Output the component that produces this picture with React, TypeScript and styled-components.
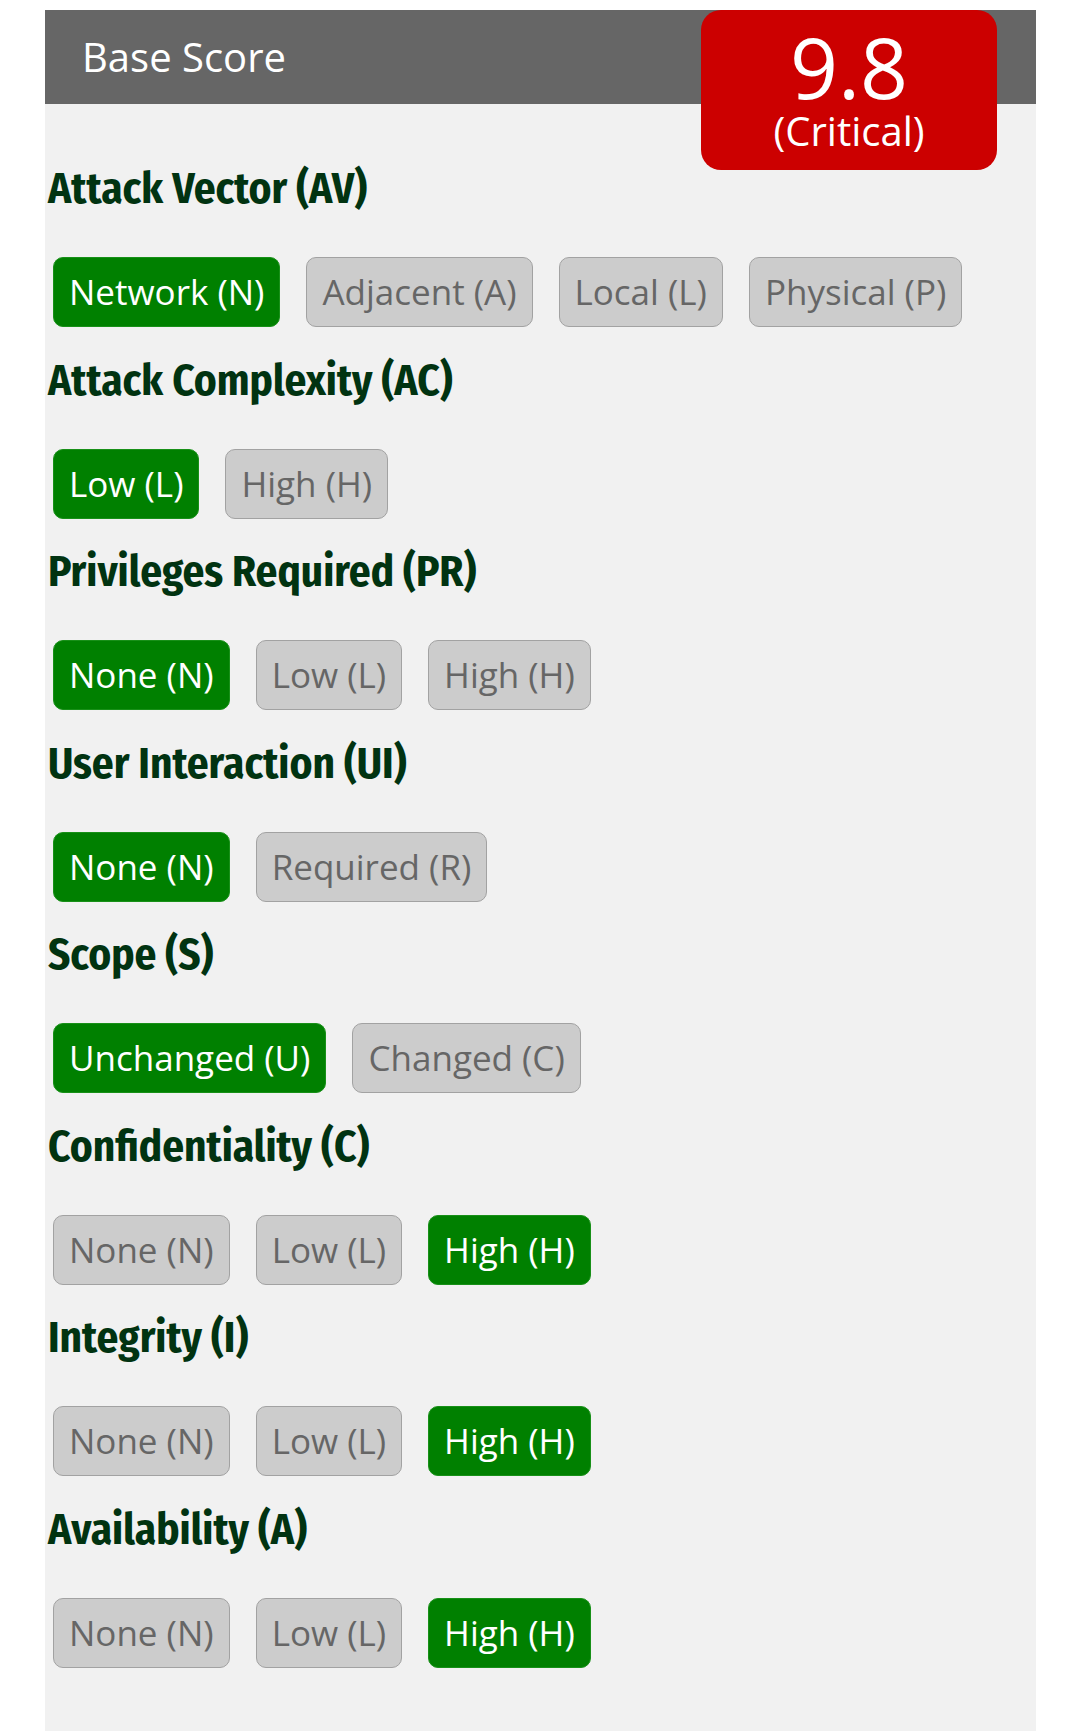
import React from "react";
import styled, { createGlobalStyle } from "styled-components";

const Global = createGlobalStyle`
  html, body { margin: 0; padding: 0; background: #ffffff; }
  body { font-family: "Open Sans", "Noto Sans", sans-serif; }
`;

const Page = styled.div`
  padding: 10px 43px 0 45px;
`;

const Panel = styled.section`
  position: relative;
  background: #f1f1f1;
  min-height: 1721px;
`;

const Header = styled.header`
  height: 94px;
  background: #666666;
  color: #ffffff;
  font-family: "Open Sans", "Noto Sans", sans-serif;
  font-size: 40px;
  line-height: 94px;
  padding-left: 37px;
`;

const ScoreBadge = styled.div`
  position: absolute;
  top: 0;
  right: 39px;
  width: 296px;
  height: 160px;
  box-sizing: border-box;
  padding-top: 15px;
  background: #cc0000;
  border-radius: 20px;
  color: #ffffff;
  font-family: "Open Sans", "Noto Sans", sans-serif;
  text-align: center;
`;

const ScoreValue = styled.div`
  font-size: 84px;
  line-height: 84px;
`;

const ScoreLabel = styled.div`
  font-size: 40px;
  line-height: 44px;
`;

const Body = styled.div`
  display: flex;
  flex-direction: column;
  gap: 28.5px;
  padding: 60px 0 40px 0;
`;

const Metric = styled.div`
  display: flex;
  flex-direction: column;
  gap: 43px;
`;

const MetricTitle = styled.h3`
  margin: 0;
  padding-left: 3px;
  font-family: "Fira Sans Condensed", "Roboto Condensed", sans-serif;
  font-weight: 700;
  font-size: 43px;
  line-height: 50px;
  color: #013311;
`;

const Options = styled.div`
  display: flex;
  gap: 26px;
  padding-left: 8px;
`;

const Option = styled.button<{ $selected: boolean }>`
  box-sizing: border-box;
  height: 70px;
  margin: 0;
  padding: 0 15px;
  border: 1px solid ${(p) => (p.$selected ? "#189018" : "#a2a2a2")};
  border-radius: 10px;
  background: ${(p) => (p.$selected ? "#008000" : "#cccccc")};
  color: ${(p) => (p.$selected ? "#ffffff" : "#666666")};
  font-family: "Open Sans", "Noto Sans", sans-serif;
  font-size: 35px;
  line-height: 68px;
  white-space: nowrap;
  cursor: pointer;
`;

type MetricDef = { title: string; options: string[]; selected: number };

const metrics: MetricDef[] = [
  {
    title: "Attack Vector (AV)",
    options: ["Network (N)", "Adjacent (A)", "Local (L)", "Physical (P)"],
    selected: 0,
  },
  { title: "Attack Complexity (AC)", options: ["Low (L)", "High (H)"], selected: 0 },
  {
    title: "Privileges Required (PR)",
    options: ["None (N)", "Low (L)", "High (H)"],
    selected: 0,
  },
  { title: "User Interaction (UI)", options: ["None (N)", "Required (R)"], selected: 0 },
  { title: "Scope (S)", options: ["Unchanged (U)", "Changed (C)"], selected: 0 },
  {
    title: "Confidentiality (C)",
    options: ["None (N)", "Low (L)", "High (H)"],
    selected: 2,
  },
  { title: "Integrity (I)", options: ["None (N)", "Low (L)", "High (H)"], selected: 2 },
  { title: "Availability (A)", options: ["None (N)", "Low (L)", "High (H)"], selected: 2 },
];

export default function App() {
  return (
    <>
      <Global />
      <Page>
        <Panel>
          <Header>Base Score</Header>
          <ScoreBadge>
            <ScoreValue>9.8</ScoreValue>
            <ScoreLabel>(Critical)</ScoreLabel>
          </ScoreBadge>
          <Body>
            {metrics.map((m) => (
              <Metric key={m.title}>
                <MetricTitle>{m.title}</MetricTitle>
                <Options>
                  {m.options.map((o, i) => (
                    <Option key={o} type="button" $selected={i === m.selected}>
                      {o}
                    </Option>
                  ))}
                </Options>
              </Metric>
            ))}
          </Body>
        </Panel>
      </Page>
    </>
  );
}
